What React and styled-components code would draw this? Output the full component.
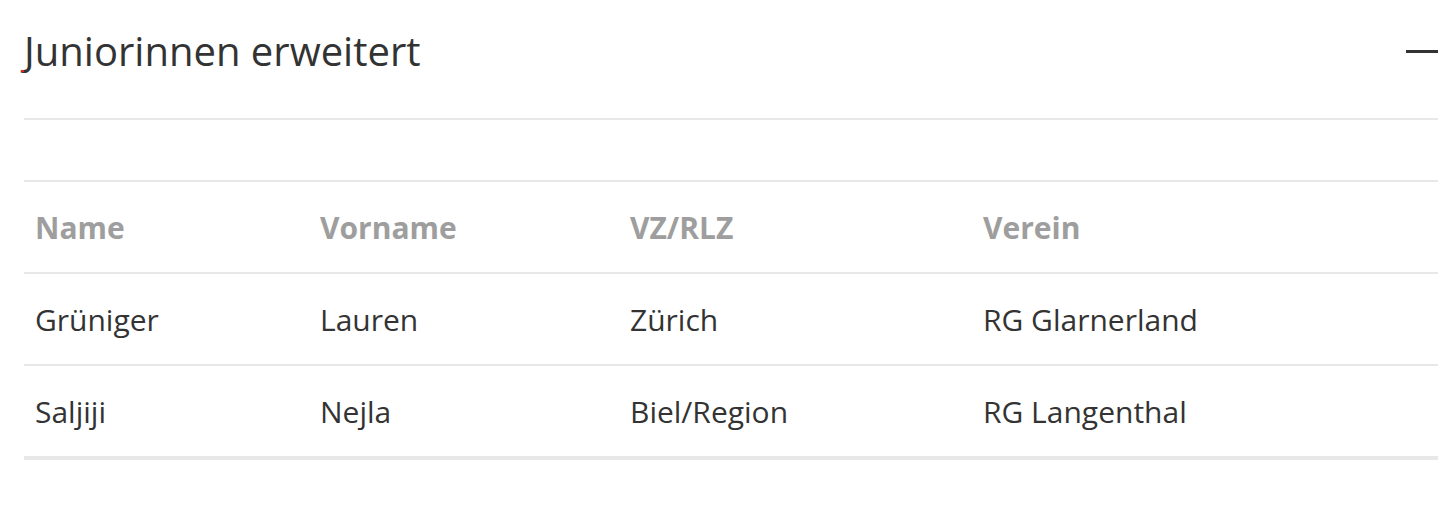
import React from "react";
import styled, { createGlobalStyle } from "styled-components";

const Global = createGlobalStyle`
  html, body { margin: 0; padding: 0; background: #fff; }
  body { font-family: "Open Sans", "Noto Sans", sans-serif; color: #333; }
`;

const Section = styled.section`
  padding: 0 18px 0 24px;
`;

const Header = styled.div`
  display: flex;
  align-items: center;
  justify-content: space-between;
  padding: 31px 0 47px;
  border-bottom: 2px solid #e8e8e8;
`;

const Title = styled.h2`
  position: relative;
  margin: 0;
  font-weight: 400;
  font-size: 40px;
  line-height: 40px;
  color: #333;
  &::before {
    content: "";
    position: absolute;
    left: -3px;
    top: 39px;
    width: 3px;
    height: 2px;
    background: #d9252b;
  }
`;

const Toggle = styled.button`
  display: flex;
  align-items: center;
  justify-content: center;
  width: 32px;
  height: 32px;
  padding: 0;
  border: 0;
  background: transparent;
  cursor: pointer;
  &::after {
    content: "";
    display: block;
    width: 32px;
    height: 3px;
    background: #333;
  }
`;

const Body = styled.div`
  padding-top: 60px;
`;

const Table = styled.table`
  width: 100%;
  border-collapse: collapse;
  border-top: 2px solid #e8e8e8;
  border-bottom: 4px solid #e8e8e8;
  table-layout: fixed;
`;

const Th = styled.th`
  width: ${(p) => p.$w - 22}px;
  text-align: left;
  font-weight: 700;
  font-size: 30px;
  color: #9e9e9e;
  padding: 0 11px;
  height: 90px;
  border-bottom: 2px solid #e8e8e8;
`;

const Td = styled.td`
  font-size: 30px;
  color: #333;
  padding: 0 11px;
  height: 90px;
  border-bottom: ${(p) => (p.$last ? "0" : "2px solid #e8e8e8")};
`;

const cols = [
  { label: "Name", w: 285 },
  { label: "Vorname", w: 310 },
  { label: "VZ/RLZ", w: 353 },
  { label: "Verein", w: 466 },
];

const rows = [
  ["Grüniger", "Lauren", "Zürich", "RG Glarnerland"],
  ["Saljiji", "Nejla", "Biel/Region", "RG Langenthal"],
];

export default function App() {
  return (
    <>
      <Global />
      <Section>
        <Header>
          <Title>Juniorinnen erweitert</Title>
          <Toggle aria-label="Einklappen" />
        </Header>
        <Body>
          <Table>
            <thead>
              <tr>
                {cols.map((c) => (
                  <Th key={c.label} $w={c.w}>
                    {c.label}
                  </Th>
                ))}
              </tr>
            </thead>
            <tbody>
              {rows.map((r, i) => (
                <tr key={i}>
                  {r.map((cell, j) => (
                    <Td key={j} $last={i === rows.length - 1}>
                      {cell}
                    </Td>
                  ))}
                </tr>
              ))}
            </tbody>
          </Table>
        </Body>
      </Section>
    </>
  );
}
